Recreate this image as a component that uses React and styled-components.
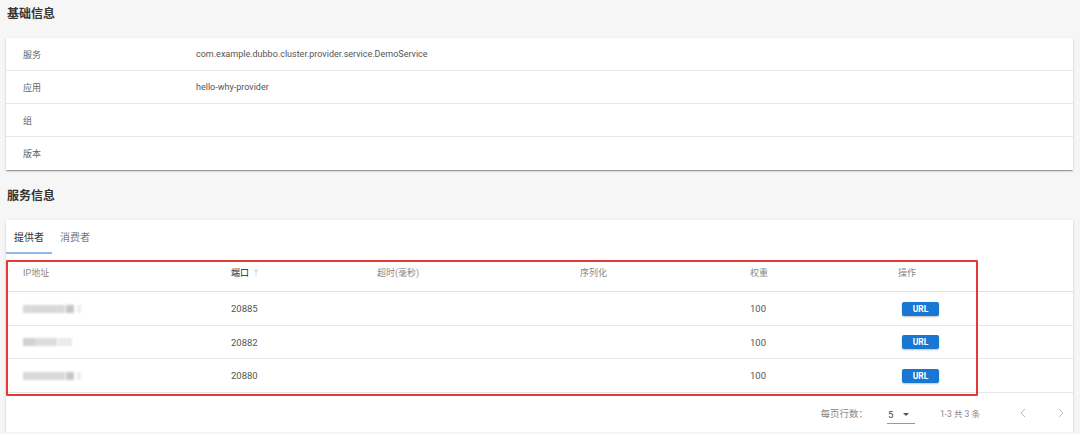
import React from 'react';
import styled, { createGlobalStyle } from 'styled-components';

const GlobalStyle = createGlobalStyle`
  body {
    margin: 0;
    background: #f6f6f6;
    font-family: Roboto, "Noto Sans CJK SC", sans-serif;
    color: rgba(0, 0, 0, 0.87);
  }
`;

const Page = styled.div`
  padding: 0 7px 0 6px;
`;

const SectionTitle = styled.div`
  font-size: 12px;
  font-weight: 700;
  line-height: 16px;
  color: #333;
  padding-left: 1px;
  margin: ${({ first }) => (first ? '6px 0 16px' : '18px 0 16px')};
`;

const Card = styled.div`
  background: #fff;
  box-shadow: 0 2px 1px -1px rgba(0, 0, 0, 0.2), 0 1px 1px 0 rgba(0, 0, 0, 0.14),
    0 1px 3px 0 rgba(0, 0, 0, 0.12);
`;

const InfoRow = styled.div`
  display: grid;
  grid-template-columns: 190px 1fr;
  align-items: center;
  height: 32px;
  font-size: 9px;
  color: #555;
  border-bottom: 1px solid #e6e6e6;
  &:last-child {
    border-bottom: none;
    height: 33px;
  }
`;

const InfoLabel = styled.div`
  padding-left: 17px;
  color: #666;
`;

const Tabs = styled.div`
  display: flex;
  height: 34px;
`;

const Tab = styled.div`
  display: flex;
  align-items: center;
  padding: 0 8px;
  font-size: 10px;
  color: ${({ active }) => (active ? '#333' : '#777')};
  border-bottom: 2px solid ${({ active }) => (active ? '#8fb8ea' : 'transparent')};
`;

const TableArea = styled.div`
  position: relative;
`;

const cols = '208px 146px 203px 170px 148px 1fr';

const HeadRow = styled.div`
  display: grid;
  grid-template-columns: ${cols};
  align-items: center;
  height: 37px;
  border-bottom: 1px solid #e0e0e0;
  font-size: 9px;
  color: #888;
`;

const BodyRow = styled.div`
  display: grid;
  grid-template-columns: ${cols};
  align-items: center;
  height: 33px;
  border-bottom: 1px solid #e6e6e6;
  font-size: 9.5px;
  color: #555;
  &:nth-child(3) {
    height: 32px;
  }
`;

const Cell = styled.div`
  padding-left: 17px;
  display: flex;
  align-items: center;
  color: ${({ sorted }) => (sorted ? '#222' : 'inherit')};
`;

const SortArrow = styled.span`
  margin-left: 3px;
  color: #c4c4c4;
  font-size: 8px;
`;

const Mosaic = styled.div`
  display: flex;
  align-items: center;
  height: 10px;
  filter: blur(1px);
`;

const Block = styled.span`
  display: inline-block;
  height: 8px;
  width: ${({ w }) => w}px;
  margin-right: ${({ gap }) => gap || 0}px;
  background: ${({ c }) => c};
`;

const UrlButton = styled.button`
  margin-left: 4px;
  width: 37px;
  height: 14px;
  border: none;
  border-radius: 2px;
  background: #1976d2;
  color: #fff;
  font-family: Roboto, sans-serif;
  font-size: 8.5px;
  font-weight: 700;
  padding: 0;
  box-shadow: 0 1px 2px rgba(0, 0, 0, 0.25);
`;

const Highlight = styled.div`
  position: absolute;
  left: 0;
  top: 6px;
  width: 972px;
  height: 136px;
  box-sizing: border-box;
  border: 2px solid #e53935;
  border-radius: 1px;
  pointer-events: none;
`;

const Footer = styled.div`
  display: flex;
  align-items: center;
  justify-content: flex-end;
  height: 39px;
  font-size: 9.5px;
  color: #888;
  padding-right: 9px;
`;

const Select = styled.div`
  display: flex;
  align-items: center;
  margin-left: 19px;
  width: 28px;
  height: 18px;
  border-bottom: 1px solid #999;
  color: #444;
  padding-left: 1px;
  margin-top: 4px;
  box-sizing: border-box;
`;

const Caret = styled.span`
  margin-left: 10px;
  width: 0;
  height: 0;
  border-left: 3.5px solid transparent;
  border-right: 3.5px solid transparent;
  border-top: 3.5px solid #555;
`;

const Range = styled.span`
  margin-left: 25px;
  font-size: 8.5px;
`;

const PageBtn = styled.span`
  display: flex;
  margin-left: ${({ gap }) => gap}px;
`;

const Chevron = ({ dir }) => (
  <svg width="6" height="10" viewBox="0 0 6 10">
    <path
      d={dir === 'left' ? 'M5 1 L1 5 L5 9' : 'M1 1 L5 5 L1 9'}
      fill="none"
      stroke="#bbb"
      strokeWidth="1"
    />
  </svg>
);

const info = [
  ['服务', 'com.example.dubbo.cluster.provider.service.DemoService'],
  ['应用', 'hello-why-provider'],
  ['组', ''],
  ['版本', ''],
];

const mosaics = [
  [
    { w: 42, c: '#d8d8d8', gap: 1 },
    { w: 8, c: '#c6c6c6', gap: 3 },
    { w: 4, c: '#ededed' },
  ],
  [
    { w: 12, c: '#d2d2d2', gap: 0 },
    { w: 22, c: '#dcdcdc', gap: 1 },
    { w: 14, c: '#ebebeb' },
  ],
  [
    { w: 42, c: '#d8d8d8', gap: 1 },
    { w: 8, c: '#c8c8c8', gap: 3 },
    { w: 4, c: '#ededed' },
  ],
];

const providers = [
  { port: '20885', weight: '100' },
  { port: '20882', weight: '100' },
  { port: '20880', weight: '100' },
];

export default function App() {
  return (
    <Page>
      <GlobalStyle />
      <SectionTitle first>基础信息</SectionTitle>
      <Card>
        {info.map(([label, value]) => (
          <InfoRow key={label}>
            <InfoLabel>{label}</InfoLabel>
            <div>{value}</div>
          </InfoRow>
        ))}
      </Card>

      <SectionTitle>服务信息</SectionTitle>
      <Card>
        <Tabs>
          <Tab active>提供者</Tab>
          <Tab>消费者</Tab>
        </Tabs>
        <TableArea>
          <HeadRow>
            <Cell>IP地址</Cell>
            <Cell sorted>
              端口<SortArrow>↑</SortArrow>
            </Cell>
            <Cell>超时(毫秒)</Cell>
            <Cell>序列化</Cell>
            <Cell>权重</Cell>
            <Cell>操作</Cell>
          </HeadRow>
          {providers.map((p, i) => (
            <BodyRow key={p.port}>
              <Cell>
                <Mosaic>
                  {mosaics[i].map((b, j) => (
                    <Block key={j} {...b} />
                  ))}
                </Mosaic>
              </Cell>
              <Cell>{p.port}</Cell>
              <Cell />
              <Cell />
              <Cell>{p.weight}</Cell>
              <Cell>
                <UrlButton>URL</UrlButton>
              </Cell>
            </BodyRow>
          ))}
          <Footer>
            <span>每页行数：</span>
            <Select>
              5<Caret />
            </Select>
            <Range>1-3 共 3 条</Range>
            <PageBtn gap={40}>
              <Chevron dir="left" />
            </PageBtn>
            <PageBtn gap={32}>
              <Chevron dir="right" />
            </PageBtn>
          </Footer>
          <Highlight />
        </TableArea>
      </Card>
    </Page>
  );
}
